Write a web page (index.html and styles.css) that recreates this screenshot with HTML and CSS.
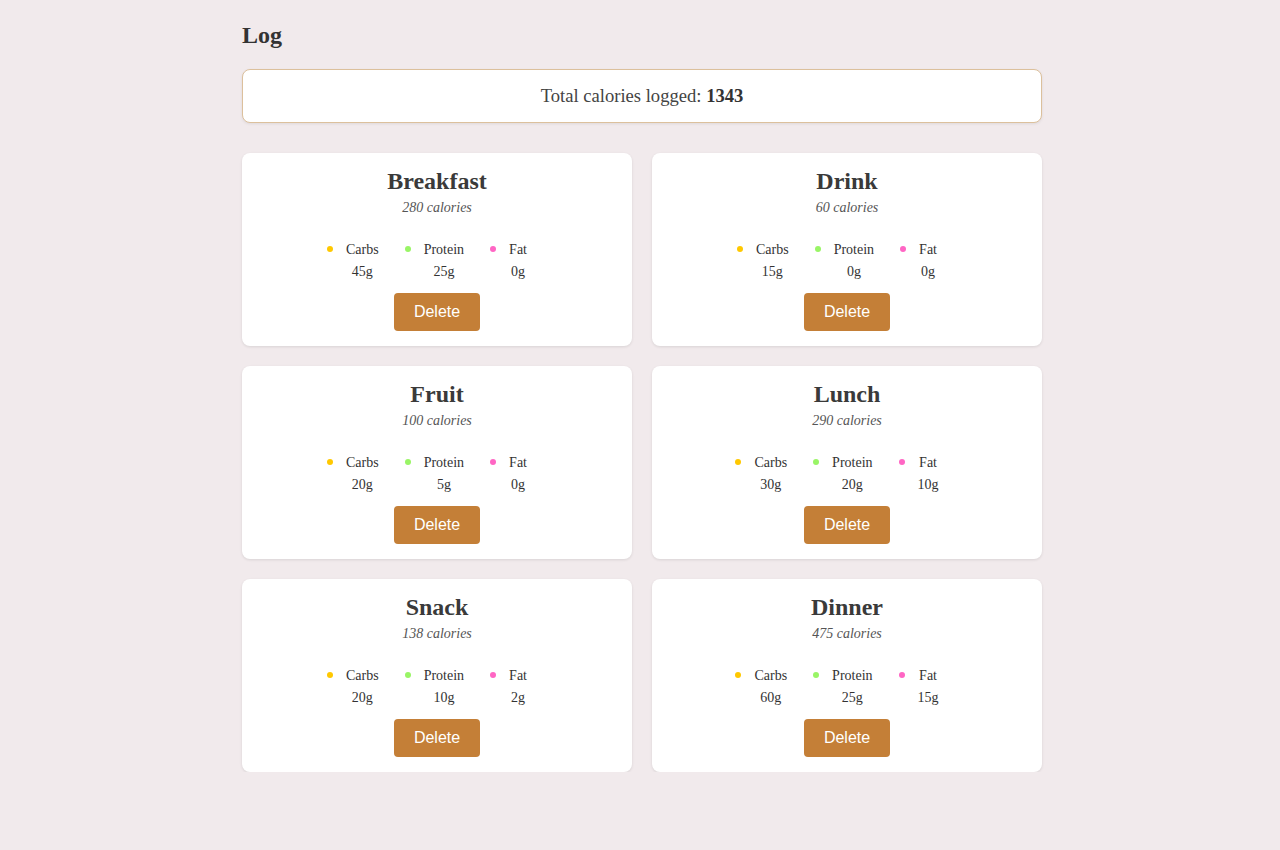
FILE: index.html
```html
<!DOCTYPE html>
<html>
<head>
<meta charset="utf-8">
<title>Log</title>
<link rel="stylesheet" href="styles.css">
</head>
<body>
<main class="container">
  <h2 class="page-title">Log</h2>
  <div class="total">Total calories logged: <strong>1343</strong></div>
  <section class="grid">
    <article class="card">
      <h3 class="card-title">Breakfast</h3>
      <p class="cal">280 calories</p>
      <ul class="macros">
        <li class="macro"><span class="dot carbs"></span><div class="mtext"><span class="mlabel">Carbs</span><span class="mval">45g</span></div></li>
        <li class="macro"><span class="dot protein"></span><div class="mtext"><span class="mlabel">Protein</span><span class="mval">25g</span></div></li>
        <li class="macro"><span class="dot fat"></span><div class="mtext"><span class="mlabel">Fat</span><span class="mval">0g</span></div></li>
      </ul>
      <button class="del">Delete</button>
    </article>
    <article class="card">
      <h3 class="card-title">Drink</h3>
      <p class="cal">60 calories</p>
      <ul class="macros">
        <li class="macro"><span class="dot carbs"></span><div class="mtext"><span class="mlabel">Carbs</span><span class="mval">15g</span></div></li>
        <li class="macro"><span class="dot protein"></span><div class="mtext"><span class="mlabel">Protein</span><span class="mval">0g</span></div></li>
        <li class="macro"><span class="dot fat"></span><div class="mtext"><span class="mlabel">Fat</span><span class="mval">0g</span></div></li>
      </ul>
      <button class="del">Delete</button>
    </article>
    <article class="card">
      <h3 class="card-title">Fruit</h3>
      <p class="cal">100 calories</p>
      <ul class="macros">
        <li class="macro"><span class="dot carbs"></span><div class="mtext"><span class="mlabel">Carbs</span><span class="mval">20g</span></div></li>
        <li class="macro"><span class="dot protein"></span><div class="mtext"><span class="mlabel">Protein</span><span class="mval">5g</span></div></li>
        <li class="macro"><span class="dot fat"></span><div class="mtext"><span class="mlabel">Fat</span><span class="mval">0g</span></div></li>
      </ul>
      <button class="del">Delete</button>
    </article>
    <article class="card">
      <h3 class="card-title">Lunch</h3>
      <p class="cal">290 calories</p>
      <ul class="macros">
        <li class="macro"><span class="dot carbs"></span><div class="mtext"><span class="mlabel">Carbs</span><span class="mval">30g</span></div></li>
        <li class="macro"><span class="dot protein"></span><div class="mtext"><span class="mlabel">Protein</span><span class="mval">20g</span></div></li>
        <li class="macro"><span class="dot fat"></span><div class="mtext"><span class="mlabel">Fat</span><span class="mval">10g</span></div></li>
      </ul>
      <button class="del">Delete</button>
    </article>
    <article class="card">
      <h3 class="card-title">Snack</h3>
      <p class="cal">138 calories</p>
      <ul class="macros">
        <li class="macro"><span class="dot carbs"></span><div class="mtext"><span class="mlabel">Carbs</span><span class="mval">20g</span></div></li>
        <li class="macro"><span class="dot protein"></span><div class="mtext"><span class="mlabel">Protein</span><span class="mval">10g</span></div></li>
        <li class="macro"><span class="dot fat"></span><div class="mtext"><span class="mlabel">Fat</span><span class="mval">2g</span></div></li>
      </ul>
      <button class="del">Delete</button>
    </article>
    <article class="card">
      <h3 class="card-title">Dinner</h3>
      <p class="cal">475 calories</p>
      <ul class="macros">
        <li class="macro"><span class="dot carbs"></span><div class="mtext"><span class="mlabel">Carbs</span><span class="mval">60g</span></div></li>
        <li class="macro"><span class="dot protein"></span><div class="mtext"><span class="mlabel">Protein</span><span class="mval">25g</span></div></li>
        <li class="macro"><span class="dot fat"></span><div class="mtext"><span class="mlabel">Fat</span><span class="mval">15g</span></div></li>
      </ul>
      <button class="del">Delete</button>
    </article>
  </section>
</main>
</body>
</html>
```

FILE: styles.css
```css
html, body {
  margin: 0;
  padding: 0;
}
body {
  background: #f1eaec;
  font-family: "Liberation Serif", "Times New Roman", serif;
  color: #333333;
  padding-left: 4px;
}
.container {
  width: 800px;
  margin: 0 auto;
  padding-top: 22px;
}
.page-title {
  margin: 0 0 20px 0;
  font-size: 24px;
  font-weight: bold;
  line-height: 27px;
  color: #333333;
}
.total {
  background: #ffffff;
  border: 1px solid #dcc09c;
  border-radius: 8px;
  box-shadow: 0 1px 3px rgba(0, 0, 0, 0.08);
  padding: 16px;
  line-height: 20px;
  font-size: 18.6px;
  text-align: center;
  color: #444444;
}
.total strong {
  color: #333333;
}
.grid {
  display: grid;
  grid-template-columns: 1fr 1fr;
  gap: 20px;
  margin-top: 30px;
}
.card {
  background: #ffffff;
  border-radius: 8px;
  box-shadow: 0 1px 3px rgba(0, 0, 0, 0.1);
  padding: 14px 15px 15px;
  display: flex;
  flex-direction: column;
  align-items: center;
  height: 193px;
  box-sizing: border-box;
}
.card-title {
  margin: 0;
  font-size: 24px;
  line-height: 28px;
  font-weight: bold;
  color: #3a3a3a;
}
.cal {
  margin: 5px 0 0 0;
  font-size: 14px;
  line-height: 16px;
  font-style: italic;
  color: #555555;
}
.macros {
  list-style: none;
  margin: 26px 0 0 0;
  padding: 0 20px 0 0;
  display: flex;
  gap: 26px;
}
.macro {
  display: flex;
  align-items: flex-start;
  gap: 13px;
}
.dot {
  width: 6px;
  height: 6px;
  border-radius: 50%;
  margin-top: 4px;
}
.dot.carbs { background: #ffc800; }
.dot.protein { background: #99f566; }
.dot.fat { background: #ff66c4; }
.mtext {
  display: flex;
  flex-direction: column;
  align-items: center;
  gap: 6px;
  font-size: 14px;
  line-height: 16px;
  color: #333333;
}
.del {
  margin-top: 13px;
  background: #c47f37;
  color: #ffffff;
  border: none;
  border-radius: 4px;
  font-family: "Liberation Sans", Arial, sans-serif;
  font-size: 16px;
  line-height: 18px;
  padding: 10px 20px;
  cursor: pointer;
}
```
